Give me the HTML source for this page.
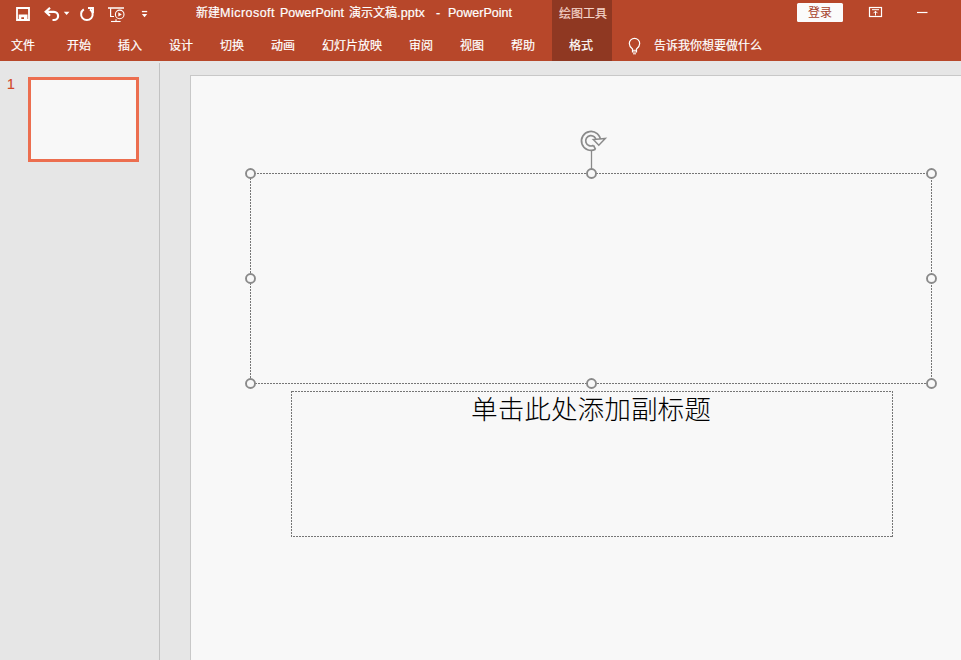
<!DOCTYPE html>
<html lang="zh-CN">
<head>
<meta charset="utf-8">
<title>PowerPoint</title>
<style>
html,body{margin:0;padding:0;}
body{width:961px;height:660px;overflow:hidden;position:relative;background:#e6e6e6;font-family:"Liberation Sans","Noto Sans CJK SC",sans-serif;}
.abs{position:absolute;}
#header{left:0;top:0;width:961px;height:61px;background:#b7472a;}
#ctxtab{left:552px;top:0;width:60px;height:61px;background:#8f3822;}
.t{position:absolute;white-space:nowrap;color:#fff;font-size:12px;line-height:16px;-webkit-text-stroke:0.2px currentColor;}
.menu{top:37.5px;}
.tt{top:5px;font-size:12px;}
.lat{font-size:12.5px;}
#ctxlabel{left:559px;top:6px;color:#f3d3c8;}
#login{left:797px;top:3px;width:46px;height:19px;background:#fbfbfb;color:#a5402a;text-align:center;line-height:20px;font-size:12px;border-radius:1.5px;}
#panel-div{left:159px;top:63px;width:1px;height:597px;background:#c2c2c2;}
#thumbnum{left:7px;top:76px;color:#d24726;font-size:14px;line-height:16px;}
#thumb{left:28px;top:77px;width:105px;height:79px;border:3px solid #ec6e4f;background:#f8f8f8;}
#slide{left:190px;top:75px;width:771px;height:585px;background:#f8f8f8;border-left:1px solid #c8c8c8;border-top:1px solid #c8c8c8;}
#sub{left:471px;top:394px;color:#000;font-size:26.67px;line-height:32px;font-family:"Liberation Sans","Noto Sans CJK SC",sans-serif;font-weight:300;-webkit-text-stroke:0;}
svg{position:absolute;left:0;top:0;}
</style>
</head>
<body>
<div id="header" class="abs"></div>
<div id="ctxtab" class="abs"></div>

<div class="t tt" style="left:196px">新建</div>
<div class="t tt lat" style="left:220px;letter-spacing:0.48px">Microsoft</div>
<div class="t tt lat" style="left:280px">PowerPoint</div>
<div class="t tt" style="left:349px">演示文稿</div>
<div class="t tt lat" style="left:397px;letter-spacing:0.18px">.pptx</div>
<div class="t tt lat" style="left:436px">-</div>
<div class="t tt lat" style="left:448px">PowerPoint</div>
<div id="ctxlabel" class="t">绘图工具</div>
<div id="login" class="abs">登录</div>

<div class="t menu" style="left:11px">文件</div>
<div class="t menu" style="left:67px">开始</div>
<div class="t menu" style="left:118px">插入</div>
<div class="t menu" style="left:169px">设计</div>
<div class="t menu" style="left:220px">切换</div>
<div class="t menu" style="left:271px">动画</div>
<div class="t menu" style="left:322px">幻灯片放映</div>
<div class="t menu" style="left:409px">审阅</div>
<div class="t menu" style="left:460px">视图</div>
<div class="t menu" style="left:511px">帮助</div>
<div class="t menu" style="left:569px">格式</div>
<div class="t menu" style="left:654px">告诉我你想要做什么</div>

<div id="panel-div" class="abs"></div>
<div id="thumbnum" class="t">1</div>
<div id="thumb" class="abs"></div>
<div id="slide" class="abs"></div>
<div id="sub" class="t">单击此处添加副标题</div>

<svg width="961" height="660" viewBox="0 0 961 660">
 <!-- quick access icons -->
 <g fill="none" stroke="#fff" stroke-width="1.800">
  <!-- save -->
  <path d="M17 8h12v12h-12z"/>
  <!-- undo -->
  <path d="M46 11.800h8a4.100 4.100 0 0 1 0 8.200h-1.500" stroke-width="2.200"/>
  <path d="M50 7.800l-4.300 4 4.300 4" stroke-width="2.200"/>
  <!-- redo circular -->
  <path d="M83.800 9.400a5.800 5.800 0 1 0 6.200 0" stroke-width="2"/>
  <path d="M88 8h5v5" stroke-width="1.900"/>
  <!-- slideshow -->
  <path d="M108 8h16" stroke-width="1.500"/>
  <path d="M110.600 8.500v8h3.400" stroke-width="1.200"/>
  <circle cx="119.700" cy="14.400" r="4.300" stroke-width="1.100"/>
  <path d="M111 21.500h9.600" stroke-width="1.100"/>
  <path d="M116 19.300v2" stroke-width="1.100"/>
  <!-- window icon -->
  <rect x="869.500" y="7.500" width="12" height="9" stroke-width="1.200"/>
  <path d="M872 9.700h7" stroke-width="1"/>
  <path d="M875.500 15.500v-4.300M873.500 13.200l2-2 2 2" stroke-width="1"/>
  <!-- minimize -->
  <path d="M917 12.500h10.500" stroke-width="1.200"/>
  <!-- bulb -->
  <path d="M632.500 52v-3c-1.900-1.500-3.200-3-3.200-5.500a5.200 5.200 0 0 1 10.400 0c0 2.500-1.300 4-3.200 5.500v3z" stroke-width="1.200"/>
  <path d="M632.500 50.300h4" stroke-width="1"/>
  <path d="M633 53.800h3" stroke-width="1"/>
 </g>
 <g fill="#fff">
  <path d="M18.700 14.600h8.800v5.600h-3.500v-2.900h-2.700v2.900h-2.600z"/>
  <path d="M118.300 12.300v4.200l3.500-2.100z"/>
  <path d="M63.800 11.800h5.700l-2.850 3.200z"/>
  <path d="M141.900 10.900h5.300v1.300h-5.300z"/>
  <path d="M141.900 14h5.300l-2.650 3.200z"/>
 </g>

 <!-- selection boxes -->
 <g fill="none" stroke="#767676" stroke-width="1" stroke-dasharray="2 1" shape-rendering="crispEdges">
  <rect x="250.500" y="173.500" width="681" height="210"/>
  <rect x="291.500" y="391.500" width="601" height="145"/>
 </g>
 <path d="M591.500 150v19" stroke="#8a8a8a" stroke-width="1.300" fill="none"/>
 <g fill="#f8f8f8" stroke="#8a8a8a" stroke-width="1.900">
  <circle cx="250.500" cy="173.500" r="4.500"/>
  <circle cx="591.500" cy="173.500" r="4.500"/>
  <circle cx="931.500" cy="173.500" r="4.500"/>
  <circle cx="250.500" cy="278.500" r="4.500"/>
  <circle cx="931.500" cy="278.500" r="4.500"/>
  <circle cx="250.500" cy="383.500" r="4.500"/>
  <circle cx="591.500" cy="383.500" r="4.500"/>
  <circle cx="931.500" cy="383.500" r="4.500"/>
 </g>
 <!-- rotate handle -->
 <g fill="none" stroke="#8a8a8a" stroke-width="1.700" transform="translate(0 0.5)">
  <path d="M595.500 148.800a9.500 9.500 0 1 1 5-8.300"/>
  <path d="M593.500 144.800a5.200 5.200 0 1 1 2.600-4.300"/>
  <path d="M593.500 144.800l2 4"/>
  <path d="M593.300 139l5.500 5.700 6.500-6.700z" fill="#f8f8f8" stroke-width="1.500"/>
 </g>
</svg>
</body>
</html>
